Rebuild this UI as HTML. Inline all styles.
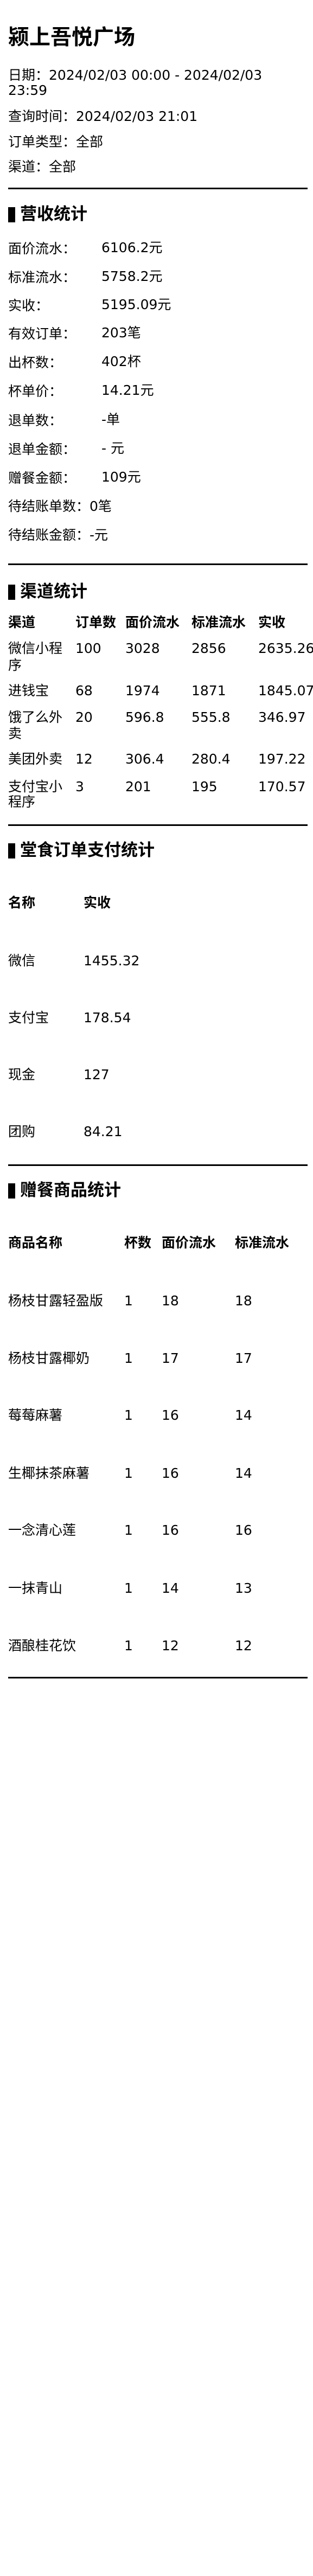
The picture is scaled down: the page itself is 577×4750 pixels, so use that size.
<!DOCTYPE html>
<html><head><meta charset="utf-8">
<style>
html,body{margin:0;padding:0;background:#fff;}
body{width:577px;height:4750px;position:relative;overflow:hidden;font-family:"DejaVu Sans","Liberation Sans","Noto Sans CJK SC",sans-serif;color:#000;}
.t{position:absolute;line-height:30px;font-size:25px;white-space:nowrap;}
.b{font-weight:bold;}
.c{font-family:"WenQuanYi Zen Hei","Noto Sans CJK SC",sans-serif;}
.h{position:absolute;font-size:31px;font-weight:bold;line-height:36px;white-space:nowrap;left:37px;}
.bar{position:absolute;left:15px;width:13px;height:28px;background:#000;}
.hr{position:absolute;left:15px;width:552px;height:3px;background:#000;}
</style></head><body>
<div class="t b" style="left:15px;top:48px;font-size:39px;line-height:44px;">颍上吾悦广场</div>
<div class="t" style="left:15px;top:122px;">日期<span class="c">：</span>2024/02/03 00:00 - 2024/02/03</div>
<div class="t" style="left:15px;top:152px;">23:59</div>
<div class="t" style="left:15px;top:198px;">查询时间<span class="c">：</span>2024/02/03 21:01</div>
<div class="t" style="left:15px;top:245px;">订单类型<span class="c">：</span>全部</div>
<div class="t" style="left:15px;top:291px;">渠道<span class="c">：</span>全部</div>
<div class="hr" style="top:346px;"></div>

<div class="bar" style="top:382px;"></div><div class="h" style="top:377px;">营收统计</div>
<div class="t" style="left:15px;top:442px;">面价流水<span class="c">：</span></div><div class="t" style="left:187px;top:442px;">6106.2元</div>
<div class="t" style="left:15px;top:495px;">标准流水<span class="c">：</span></div><div class="t" style="left:187px;top:495px;">5758.2元</div>
<div class="t" style="left:15px;top:547px;">实收<span class="c">：</span></div><div class="t" style="left:187px;top:547px;">5195.09元</div>
<div class="t" style="left:15px;top:599px;">有效订单<span class="c">：</span></div><div class="t" style="left:187px;top:599px;">203笔</div>
<div class="t" style="left:15px;top:652px;">出杯数<span class="c">：</span></div><div class="t" style="left:187px;top:652px;">402杯</div>
<div class="t" style="left:15px;top:705px;">杯单价<span class="c">：</span></div><div class="t" style="left:187px;top:705px;">14.21元</div>
<div class="t" style="left:15px;top:759px;">退单数<span class="c">：</span></div><div class="t" style="left:187px;top:759px;">-单</div>
<div class="t" style="left:15px;top:812px;">退单金额<span class="c">：</span></div><div class="t" style="left:187px;top:812px;">- 元</div>
<div class="t" style="left:15px;top:865px;">赠餐金额<span class="c">：</span></div><div class="t" style="left:187px;top:865px;">109元</div>
<div class="t" style="left:15px;top:917px;">待结账单数<span class="c">：</span>0笔</div>
<div class="t" style="left:15px;top:970px;">待结账金额<span class="c">：</span>-元</div>
<div class="hr" style="top:1039px;"></div>

<div class="bar" style="top:1078px;"></div><div class="h" style="top:1073px;">渠道统计</div>
<div class="t b" style="left:15px;top:1133px;">渠道</div><div class="t b" style="left:139px;top:1133px;">订单数</div><div class="t b" style="left:231px;top:1133px;">面价流水</div><div class="t b" style="left:353px;top:1133px;">标准流水</div><div class="t b" style="left:476px;top:1133px;">实收</div>
<div class="t" style="left:15px;top:1181px;">微信小程</div><div class="t" style="left:15px;top:1212px;">序</div><div class="t" style="left:139px;top:1181px;">100</div><div class="t" style="left:231px;top:1181px;">3028</div><div class="t" style="left:353px;top:1181px;">2856</div><div class="t" style="left:476px;top:1181px;">2635.26</div>
<div class="t" style="left:15px;top:1259px;">进钱宝</div><div class="t" style="left:139px;top:1259px;">68</div><div class="t" style="left:231px;top:1259px;">1974</div><div class="t" style="left:353px;top:1259px;">1871</div><div class="t" style="left:476px;top:1259px;">1845.07</div>
<div class="t" style="left:15px;top:1308px;">饿了么外</div><div class="t" style="left:15px;top:1338px;">卖</div><div class="t" style="left:139px;top:1308px;">20</div><div class="t" style="left:231px;top:1308px;">596.8</div><div class="t" style="left:353px;top:1308px;">555.8</div><div class="t" style="left:476px;top:1308px;">346.97</div>
<div class="t" style="left:15px;top:1385px;">美团外卖</div><div class="t" style="left:139px;top:1385px;">12</div><div class="t" style="left:231px;top:1385px;">306.4</div><div class="t" style="left:353px;top:1385px;">280.4</div><div class="t" style="left:476px;top:1385px;">197.22</div>
<div class="t" style="left:15px;top:1436px;">支付宝小</div><div class="t" style="left:15px;top:1464px;">程序</div><div class="t" style="left:139px;top:1436px;">3</div><div class="t" style="left:231px;top:1436px;">201</div><div class="t" style="left:353px;top:1436px;">195</div><div class="t" style="left:476px;top:1436px;">170.57</div>
<div class="hr" style="top:1520px;"></div>

<div class="bar" style="top:1555px;"></div><div class="h" style="top:1550px;">堂食订单支付统计</div>
<div class="t b" style="left:15px;top:1650px;">名称</div><div class="t b" style="left:154px;top:1650px;">实收</div>
<div class="t" style="left:15px;top:1757px;">微信</div><div class="t" style="left:154px;top:1757px;">1455.32</div>
<div class="t" style="left:15px;top:1862px;">支付宝</div><div class="t" style="left:154px;top:1862px;">178.54</div>
<div class="t" style="left:15px;top:1967px;">现金</div><div class="t" style="left:154px;top:1967px;">127</div>
<div class="t" style="left:15px;top:2072px;">团购</div><div class="t" style="left:154px;top:2072px;">84.21</div>
<div class="hr" style="top:2147px;"></div>

<div class="bar" style="top:2182px;"></div><div class="h" style="top:2177px;">赠餐商品统计</div>
<div class="t b" style="left:15px;top:2277px;">商品名称</div><div class="t b" style="left:229px;top:2277px;">杯数</div><div class="t b" style="left:298px;top:2277px;">面价流水</div><div class="t b" style="left:433px;top:2277px;">标准流水</div>
<div class="t" style="left:15px;top:2384px;">杨枝甘露轻盈版</div><div class="t" style="left:229px;top:2384px;">1</div><div class="t" style="left:298px;top:2384px;">18</div><div class="t" style="left:433px;top:2384px;">18</div>
<div class="t" style="left:15px;top:2490px;">杨枝甘露椰奶</div><div class="t" style="left:229px;top:2490px;">1</div><div class="t" style="left:298px;top:2490px;">17</div><div class="t" style="left:433px;top:2490px;">17</div>
<div class="t" style="left:15px;top:2595px;">莓莓麻薯</div><div class="t" style="left:229px;top:2595px;">1</div><div class="t" style="left:298px;top:2595px;">16</div><div class="t" style="left:433px;top:2595px;">14</div>
<div class="t" style="left:15px;top:2702px;">生椰抹茶麻薯</div><div class="t" style="left:229px;top:2702px;">1</div><div class="t" style="left:298px;top:2702px;">16</div><div class="t" style="left:433px;top:2702px;">14</div>
<div class="t" style="left:15px;top:2807px;">一念清心莲</div><div class="t" style="left:229px;top:2807px;">1</div><div class="t" style="left:298px;top:2807px;">16</div><div class="t" style="left:433px;top:2807px;">16</div>
<div class="t" style="left:15px;top:2914px;">一抹青山</div><div class="t" style="left:229px;top:2914px;">1</div><div class="t" style="left:298px;top:2914px;">14</div><div class="t" style="left:433px;top:2914px;">13</div>
<div class="t" style="left:15px;top:3020px;">酒酿桂花饮</div><div class="t" style="left:229px;top:3020px;">1</div><div class="t" style="left:298px;top:3020px;">12</div><div class="t" style="left:433px;top:3020px;">12</div>
<div class="hr" style="top:3092px;"></div>
</body></html>
